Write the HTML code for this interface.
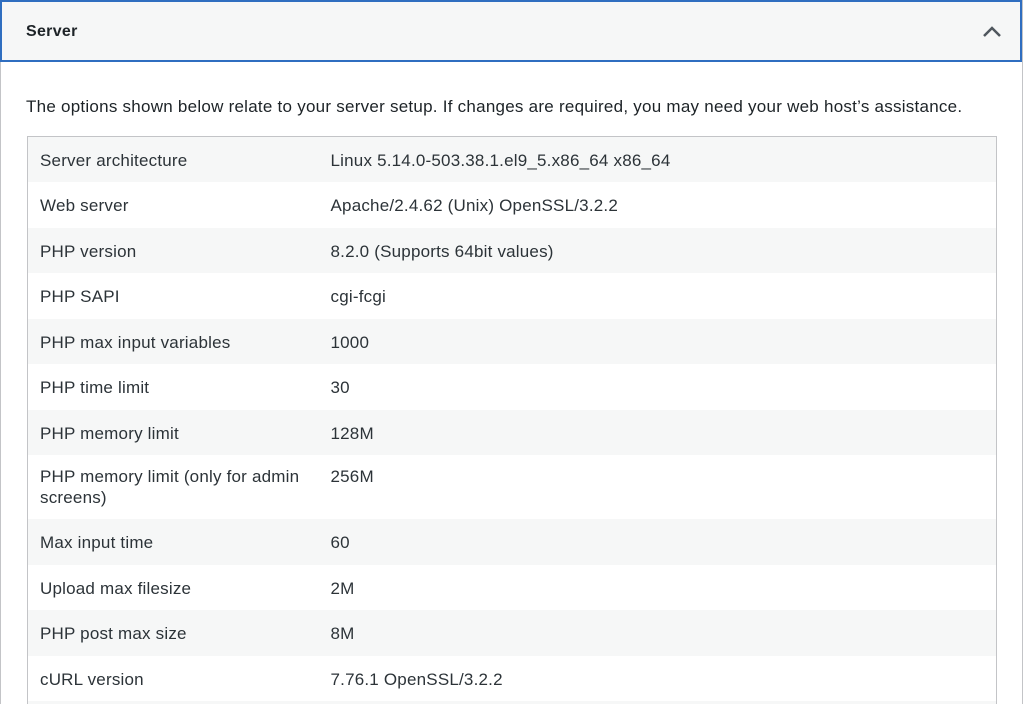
<!DOCTYPE html>
<html><head><style>
html,body{margin:0;padding:0;width:1024px;height:704px;overflow:hidden;background:#fff;font-family:"Liberation Sans",Arial,sans-serif;color:#1d2327}
.wrap{position:relative;width:1024px;height:704px;overflow:hidden}
.panel{position:absolute;left:0;top:0;width:1021px;height:704px;border-right:1px solid #c3c4c7;border-left:1px solid #c3c4c7}
.hdr{position:absolute;left:0;top:0;width:1018px;height:58px;border:2px solid #2f6ec0;background:#f6f7f7}
.hdr span{position:absolute;left:24px;top:21px;font-size:16px;font-weight:bold;letter-spacing:0.3px}
.hdr svg{position:absolute;left:978px;top:22px}
.desc{position:absolute;left:26px;top:97px;font-size:17px;letter-spacing:0.25px;color:#1d2327;white-space:nowrap}
table{position:absolute;left:27px;top:136px;width:970px;border-collapse:collapse;border:1px solid #c3c4c7;font-size:17px;letter-spacing:0.2px;color:#2c3338}
td{padding:2px 12px 0 12px;height:45.5px;vertical-align:middle;line-height:21px;box-sizing:border-box}
td:first-child{width:291px}
tr:nth-child(odd){background:#f6f7f7}
tr.tall td{height:64px;vertical-align:top;padding-top:11px}
</style></head><body><div class="wrap">
<div class="panel"></div>
<div class="hdr"><span>Server</span>
<svg width="24" height="16" viewBox="0 0 24 16"><path d="M4 12 L12 4 L20 12" fill="none" stroke="#50575e" stroke-width="2.5"/></svg></div>
<div class="desc">The options shown below relate to your server setup. If changes are required, you may need your web host’s assistance.</div>
<table>
<tr><td>Server architecture</td><td>Linux 5.14.0-503.38.1.el9_5.x86_64 x86_64</td></tr>
<tr><td>Web server</td><td>Apache/2.4.62 (Unix) OpenSSL/3.2.2</td></tr>
<tr><td>PHP version</td><td>8.2.0 (Supports 64bit values)</td></tr>
<tr><td>PHP SAPI</td><td>cgi-fcgi</td></tr>
<tr><td>PHP max input variables</td><td>1000</td></tr>
<tr><td>PHP time limit</td><td>30</td></tr>
<tr><td>PHP memory limit</td><td>128M</td></tr>
<tr class="tall"><td>PHP memory limit (only for admin screens)</td><td>256M</td></tr>
<tr><td>Max input time</td><td>60</td></tr>
<tr><td>Upload max filesize</td><td>2M</td></tr>
<tr><td>PHP post max size</td><td>8M</td></tr>
<tr><td>cURL version</td><td>7.76.1 OpenSSL/3.2.2</td></tr>
<tr><td>&nbsp;</td><td>&nbsp;</td></tr>
</table>
</div></body></html>
